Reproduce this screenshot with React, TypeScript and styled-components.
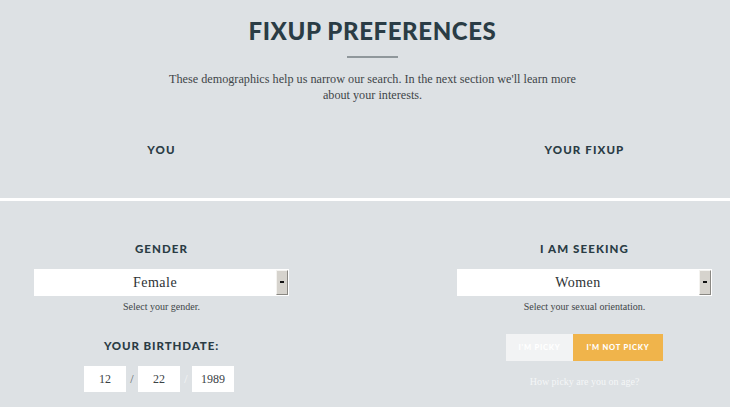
import React from "react";
import styled, { createGlobalStyle } from "styled-components";

const Global = createGlobalStyle`
  html, body { margin: 0; padding: 0; background: #dde1e4; }
  body { width: 730px; height: 407px; overflow: hidden; }
`;

const Page = styled.div`
  width: 730px;
  background: #dde1e4;
  font-family: "Liberation Serif", serif;
  color: #3d4549;
`;

const Header = styled.header`
  display: flex;
  flex-direction: column;
  align-items: center;
  padding-top: 17px;
  padding-left: 15px;
`;

const Title = styled.h1`
  margin: 0;
  font-family: Lato, "Open Sans", sans-serif;
  font-weight: 900;
  font-size: 24px;
  line-height: 28px;
  letter-spacing: 0.6px;
  color: #2a3c45;
`;

const Rule = styled.div`
  width: 51px;
  height: 2px;
  background: #8f979b;
  margin-top: 11px;
`;

const Intro = styled.p`
  margin: 13px 0 0;
  width: 425px;
  text-align: center;
  font-size: 12.2px;
  line-height: 16px;
  color: #3f4649;
`;

const Columns = styled.div<{ $top: number }>`
  display: grid;
  grid-template-columns: 255px 255px;
  column-gap: 168px;
  padding-left: 34px;
  margin-top: ${(p) => p.$top}px;
`;

const Column = styled.div`
  display: flex;
  flex-direction: column;
  align-items: center;
`;

const Heading = styled.h2`
  margin: 0;
  font-family: Lato, "Open Sans", sans-serif;
  font-weight: 900;
  font-size: 11.5px;
  line-height: 14px;
  letter-spacing: 1.1px;
  color: #2a3c45;
`;

const Divider = styled.div`
  height: 3px;
  background: #ffffff;
  margin-top: 41px;
`;

const SelectBox = styled.div`
  margin-top: 13px;
  width: 255px;
  height: 27px;
  display: flex;
  background: #fff;
`;

const SelectValue = styled.div`
  flex: 1;
  display: flex;
  align-items: center;
  justify-content: center;
  font-size: 14px;
  letter-spacing: 0.5px;
  color: #2c3235;
`;

const ArrowButton = styled.div`
  width: 10px;
  margin: 1px 1px 1px 0;
  background: #d6d3cd;
  border-left: 1px solid #f4f3f0;
  border-top: 1px solid #f4f3f0;
  border-right: 1px solid #8a8883;
  border-bottom: 1px solid #8a8883;
  display: flex;
  align-items: center;
  justify-content: center;
`;

const Help = styled.div<{ $color?: string; $top?: number }>`
  margin-top: ${(p) => p.$top ?? 4}px;
  font-size: 10px;
  line-height: 13px;
  color: ${(p) => p.$color || "#3f4649"};
`;

const SubHeading = styled(Heading)`
  margin-top: 26px;
  letter-spacing: 0.9px;
`;

const DateRow = styled.div`
  margin-top: 13px;
  display: flex;
  align-items: center;
  gap: 4px;
  margin-left: -5px;
`;

const DateField = styled.div`
  width: 42px;
  height: 26px;
  background: #fff;
  display: flex;
  align-items: center;
  justify-content: center;
  font-size: 12px;
  color: #3a4245;
`;

const Slash = styled.span<{ $light?: boolean }>`
  width: 4px;
  text-align: center;
  font-size: 12px;
  color: ${(p) => (p.$light ? "#f4f6f7" : "#5a6165")};
`;

const Toggle = styled.div`
  margin-top: 21px;
  display: flex;
`;

const ToggleButton = styled.div<{ $active?: boolean; $w: number }>`
  width: ${(p) => p.$w}px;
  height: 27px;
  display: flex;
  align-items: center;
  justify-content: center;
  background: ${(p) => (p.$active ? "#f0b44b" : "#f2f3f4")};
  color: #fff;
  font-family: Lato, "Open Sans", sans-serif;
  font-weight: 900;
  font-size: 7.5px;
  letter-spacing: 0.8px;
`;

const Arrow = () => (
  <svg width="4" height="3" viewBox="0 0 4 3">
    <rect x="0" y="0" width="4" height="2" fill="#111" />
  </svg>
);

export default function App() {
  return (
    <Page>
      <Global />
      <Header>
        <Title>FIXUP PREFERENCES</Title>
        <Rule />
        <Intro>
          These demographics help us narrow our search. In the next section we'll learn more
          about your interests.
        </Intro>
      </Header>
      <Columns $top={40}>
        <Column>
          <Heading>YOU</Heading>
        </Column>
        <Column>
          <Heading>YOUR FIXUP</Heading>
        </Column>
      </Columns>
      <Divider />
      <Columns $top={41}>
        <Column>
          <Heading>GENDER</Heading>
          <SelectBox>
            <SelectValue>Female</SelectValue>
            <ArrowButton>
              <Arrow />
            </ArrowButton>
          </SelectBox>
          <Help>Select your gender.</Help>
          <SubHeading>YOUR BIRTHDATE:</SubHeading>
          <DateRow>
            <DateField>12</DateField>
            <Slash>/</Slash>
            <DateField>22</DateField>
            <Slash $light>/</Slash>
            <DateField>1989</DateField>
          </DateRow>
        </Column>
        <Column>
          <Heading>I AM SEEKING</Heading>
          <SelectBox>
            <SelectValue>Women</SelectValue>
            <ArrowButton>
              <Arrow />
            </ArrowButton>
          </SelectBox>
          <Help>Select your sexual orientation.</Help>
          <Toggle>
            <ToggleButton $w={67}>I'M PICKY</ToggleButton>
            <ToggleButton $w={90} $active>
              I'M NOT PICKY
            </ToggleButton>
          </Toggle>
          <Help $color="#f4f6f7" $top={14}>
            How picky are you on age?
          </Help>
        </Column>
      </Columns>
    </Page>
  );
}
